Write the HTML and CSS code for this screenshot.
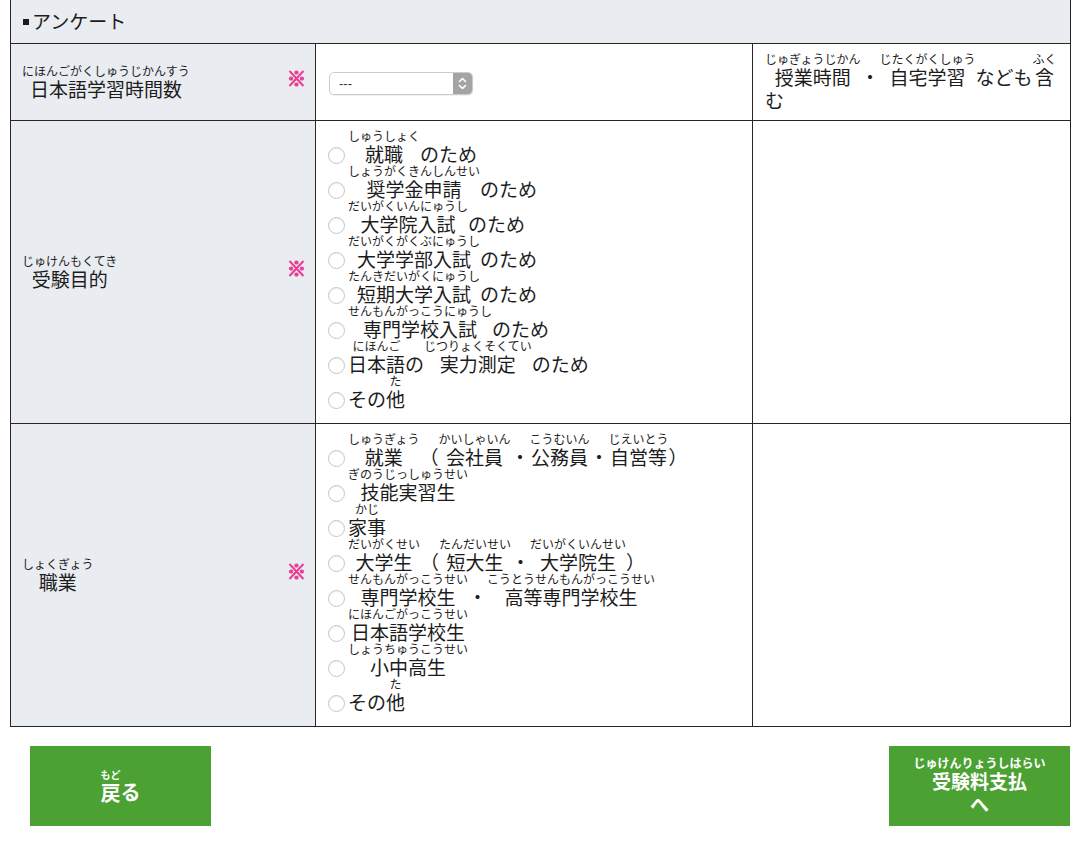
FILE: index.html
```html
<!DOCTYPE html>
<html lang="ja">
<head>
<meta charset="utf-8">
<title>アンケート</title>
<link rel="stylesheet" href="styles.css">
</head>
<body>
<div class="page">
  <table class="form">
    <colgroup><col class="c1"><col class="c2"><col class="c3"></colgroup>
    <tr>
      <th class="head" colspan="3"><span class="bullet"></span>アンケート</th>
    </tr>
    <tr>
      <th class="label"><div class="label-in"><ruby>日本語学習時間数<rt>にほんごがくしゅうじかんすう</rt></ruby><span class="req">※</span></div></th>
      <td class="field field-select">
        <span class="select-wrap"><select class="select"><option>---</option></select><svg class="select-btn" width="19" height="21" viewBox="0 0 19 21"><path d="M0 0H15a4 4 0 0 1 4 4V17a4 4 0 0 1-4 4H0Z" fill="#a4a4a4"/><path d="M6.5 8.5 9.5 5.5 12.5 8.5M6.5 12.5 9.5 15.5 12.5 12.5" fill="none" stroke="#fff" stroke-width="1.6" stroke-linecap="round" stroke-linejoin="round"/></svg></span>
      </td>
      <td class="note"><ruby>授業時間<rt>じゅぎょうじかん</rt></ruby>・<ruby>自宅学習<rt>じたくがくしゅう</rt></ruby>なども<ruby>含<rt>ふく</rt></ruby>む</td>
    </tr>
    <tr>
      <th class="label"><div class="label-in"><ruby>受験目的<rt>じゅけんもくてき</rt></ruby><span class="req">※</span></div></th>
      <td class="field">
        <label class="opt"><input type="radio" name="purpose"><ruby>就職<rt>しゅうしょく</rt></ruby>のため</label>
        <label class="opt"><input type="radio" name="purpose"><ruby>奨学金申請<rt>しょうがくきんしんせい</rt></ruby>のため</label>
        <label class="opt"><input type="radio" name="purpose"><ruby>大学院入試<rt>だいがくいんにゅうし</rt></ruby>のため</label>
        <label class="opt"><input type="radio" name="purpose"><ruby>大学学部入試<rt>だいがくがくぶにゅうし</rt></ruby>のため</label>
        <label class="opt"><input type="radio" name="purpose"><ruby>短期大学入試<rt>たんきだいがくにゅうし</rt></ruby>のため</label>
        <label class="opt"><input type="radio" name="purpose"><ruby>専門学校入試<rt>せんもんがっこうにゅうし</rt></ruby>のため</label>
        <label class="opt"><input type="radio" name="purpose"><ruby>日本語<rt>にほんご</rt></ruby>の<ruby>実力測定<rt>じつりょくそくてい</rt></ruby>のため</label>
        <label class="opt"><input type="radio" name="purpose">その<ruby>他<rt>た</rt></ruby></label>
      </td>
      <td class="note"></td>
    </tr>
    <tr>
      <th class="label"><div class="label-in"><ruby>職業<rt>しょくぎょう</rt></ruby><span class="req">※</span></div></th>
      <td class="field">
        <label class="opt"><input type="radio" name="job"><ruby>就業<rt>しゅうぎょう</rt></ruby>（<ruby>会社員<rt>かいしゃいん</rt></ruby>・<ruby>公務員<rt>こうむいん</rt></ruby>・<ruby>自営等<rt>じえいとう</rt></ruby>）</label>
        <label class="opt"><input type="radio" name="job"><ruby>技能実習生<rt>ぎのうじっしゅうせい</rt></ruby></label>
        <label class="opt"><input type="radio" name="job"><ruby>家事<rt>かじ</rt></ruby></label>
        <label class="opt"><input type="radio" name="job"><ruby>大学生<rt>だいがくせい</rt></ruby>（<ruby>短大生<rt>たんだいせい</rt></ruby>・<ruby>大学院生<rt>だいがくいんせい</rt></ruby>）</label>
        <label class="opt"><input type="radio" name="job"><ruby>専門学校生<rt>せんもんがっこうせい</rt></ruby>・<ruby>高等専門学校生<rt>こうとうせんもんがっこうせい</rt></ruby></label>
        <label class="opt"><input type="radio" name="job"><ruby>日本語学校生<rt>にほんごがっこうせい</rt></ruby></label>
        <label class="opt"><input type="radio" name="job"><ruby>小中高生<rt>しょうちゅうこうせい</rt></ruby></label>
        <label class="opt"><input type="radio" name="job">その<ruby>他<rt>た</rt></ruby></label>
      </td>
      <td class="note"></td>
    </tr>
  </table>
  <div class="actions">
    <a class="btn btn-back" href="#"><span class="btn-text"><ruby>戻<rt>もど</rt></ruby>る</span></a>
    <a class="btn btn-pay" href="#"><span class="btn-text"><ruby>受験料支払<rt>じゅけんりょうしはらい</rt></ruby><br>へ</span></a>
  </div>
</div>
</body>
</html>
```
FILE: styles.css
```css
* { box-sizing: border-box; }
html, body { margin: 0; background: #fff; }
body {
  font-family: "Noto Sans CJK JP", "Noto Sans", sans-serif;
  color: #1c1c1c;
  font-size: 19px;
  line-height: 23px;
}
.page { padding: 0 10px; }

/* furigana: annotation stacked above its base, base sits on the line baseline */
ruby {
  display: inline-flex;
  flex-direction: column-reverse;
  align-items: center;
  vertical-align: 20.6px;
  line-height: 23px;
}
rt {
  display: block;
  font-size: 12px;
  line-height: 12px;
  text-align: center;
  white-space: nowrap;
}

.form {
  width: 1060px;
  border-collapse: collapse;
  table-layout: fixed;
}
.c1 { width: 305px; }
.c2 { width: 437px; }
.c3 { width: 318px; }
.form th, .form td {
  border: 1px solid #262626;
  vertical-align: middle;
  text-align: left;
  font-weight: normal;
  padding: 11px 12px;
}
.form .head {
  border-top: none;
  background: #e9ecf0;
  padding: 9px 12px 11px;
}
.bullet {
  display: inline-block;
  width: 6px;
  height: 6px;
  background: #1c1c1c;
  margin: 0 3px 3px 0;
  vertical-align: middle;
}
.form .label {
  background: #e9ecf0;
  padding: 11px 9px 11px 11px;
}
.label-in {
  display: flex;
  align-items: center;
  justify-content: space-between;
}
.req {
  color: #ea3d95;
  font-size: 19px;
  line-height: 19px;
  font-weight: bold;
  -webkit-text-stroke: 1.2px #ea3d95;
  margin-bottom: 10px;
}
.form .field { padding: 9px 12px 13px; }
.form .field-select { padding: 11px 12px; }
.form .note { padding: 9px 12px; }

.select-wrap {
  position: relative;
  display: inline-block;
  margin-left: 1px;
  vertical-align: middle;
}
.select {
  appearance: none;
  -webkit-appearance: none;
  display: block;
  width: 144px;
  height: 23px;
  border: 1px solid #cbcbcb;
  border-radius: 5px;
  background: #fff;
  box-shadow: 0 1px 1px rgba(0,0,0,0.06);
  font-family: "Liberation Sans", sans-serif;
  font-size: 13px;
  color: #333;
  padding: 0 0 0 9px;
  margin: 0;
}
.select-btn {
  position: absolute;
  right: 1px;
  top: 1px;
  pointer-events: none;
}

.opt {
  display: block;
  white-space: nowrap;
}
.opt input {
  appearance: none;
  -webkit-appearance: none;
  width: 17px;
  height: 17px;
  margin: 0 3px 0 0;
  border: 1px solid #c6c6c6;
  border-radius: 50%;
  background: #fff;
  box-shadow: inset 0 1px 1px rgba(0,0,0,0.07);
  vertical-align: -2px;
}

.actions {
  display: flex;
  justify-content: space-between;
  padding: 19px 0 0 20px;
}
.btn {
  display: flex;
  align-items: center;
  justify-content: center;
  width: 181px;
  height: 80px;
  background: #4ca133;
  color: #fff;
  text-decoration: none;
  font-weight: bold;
}
.btn-text {
  text-align: center;
  line-height: 23px;
}
.btn-back .btn-text { font-size: 20px; }
.btn-back rt { font-size: 10px; }
```
